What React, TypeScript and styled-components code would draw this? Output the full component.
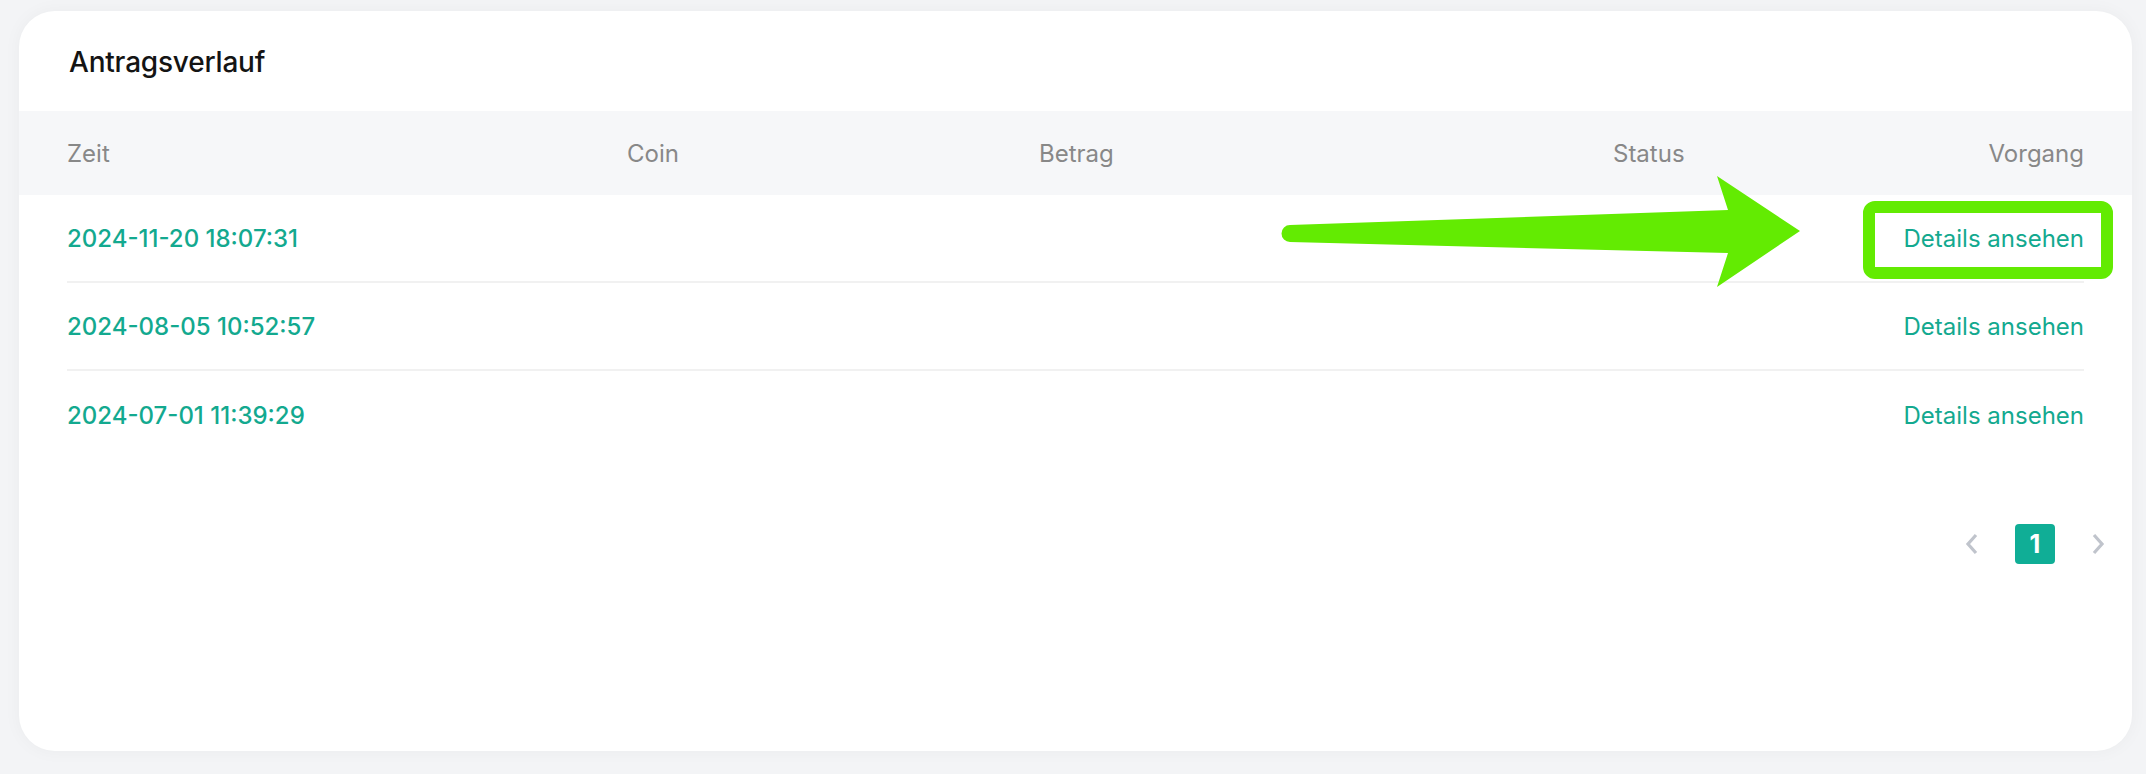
import React from "react";
import styled, { createGlobalStyle } from "styled-components";

const GlobalStyle = createGlobalStyle`
  html, body {
    margin: 0;
    padding: 0;
    background: #f3f4f6;
    font-family: Inter, "Noto Sans", sans-serif;
  }
  * { box-sizing: border-box; }
`;

const Page = styled.div`
  padding: 11px 14px 23px 19px;
`;

const Card = styled.section`
  position: relative;
  height: 740px;
  background: #ffffff;
  border-radius: 36px;
  box-shadow: 0 0 18px rgba(20, 30, 60, 0.04);
`;

const Title = styled.h2`
  margin: 0;
  height: 100px;
  display: flex;
  align-items: center;
  padding: 2px 0 0 50px;
  font-size: 28px;
  font-weight: 500;
  color: #141414;
  letter-spacing: -0.2px;
`;

const Columns = "560px 412px 574px 200px 1fr";

const HeaderRow = styled.div`
  display: grid;
  grid-template-columns: ${Columns};
  align-items: center;
  height: 84px;
  padding: 0 48px;
  background: #f6f7f9;
  color: #888888;
  font-size: 24px;
`;

const HeaderCell = styled.div<{ $right?: boolean }>`
  text-align: ${(p) => (p.$right ? "right" : "left")};
`;

const Body = styled.div`
  padding: 0 48px;
`;

const Row = styled.div`
  display: grid;
  grid-template-columns: ${Columns};
  align-items: center;
  height: 88px;
  border-bottom: 2px solid #f1f1f1;
  &:last-child {
    border-bottom: none;
  }
`;

const DateCell = styled.div`
  color: #13a98f;
  font-size: 24px;
  font-weight: 500;
`;

const Cell = styled.div``;

const ActionCell = styled.a`
  justify-self: end;
  color: #13a98f;
  font-size: 24px;
  cursor: pointer;
`;

const Pagination = styled.nav`
  display: flex;
  justify-content: flex-end;
  align-items: center;
  gap: 23px;
  margin-top: 65px;
  padding-right: 14px;
`;

const PageArrow = styled.button`
  width: 40px;
  height: 40px;
  display: flex;
  align-items: center;
  justify-content: center;
  border: none;
  background: transparent;
  padding: 0;
  color: #c0c4cc;
`;

const PageNumber = styled.button<{ $active?: boolean }>`
  width: 40px;
  height: 40px;
  border: none;
  border-radius: 4px;
  background: ${(p) => (p.$active ? "#10ae96" : "transparent")};
  color: ${(p) => (p.$active ? "#ffffff" : "#333")};
  font-family: Inter, sans-serif;
  font-size: 25px;
  font-weight: 700;
  padding: 0;
`;

const Overlay = styled.svg`
  position: absolute;
  left: 0;
  top: 0;
  pointer-events: none;
`;

const rows = ["2024-11-20 18:07:31", "2024-08-05 10:52:57", "2024-07-01 11:39:29"];

const Chevron = ({ dir }: { dir: "left" | "right" }) => (
  <svg width="14" height="22" viewBox="0 0 14 22" fill="none">
    <path
      d={dir === "left" ? "M11 2 L3 11 L11 20" : "M3 2 L11 11 L3 20"}
      stroke="currentColor"
      strokeWidth="3.2"
      strokeLinecap="butt"
      strokeLinejoin="miter"
    />
  </svg>
);

export default function App() {
  return (
    <>
      <GlobalStyle />
      <Page>
        <Card>
          <Title>Antragsverlauf</Title>
          <HeaderRow>
            <HeaderCell>Zeit</HeaderCell>
            <HeaderCell>Coin</HeaderCell>
            <HeaderCell>Betrag</HeaderCell>
            <HeaderCell>Status</HeaderCell>
            <HeaderCell $right>Vorgang</HeaderCell>
          </HeaderRow>
          <Body>
            {rows.map((d) => (
              <Row key={d}>
                <DateCell>{d}</DateCell>
                <Cell />
                <Cell />
                <Cell />
                <ActionCell>Details ansehen</ActionCell>
              </Row>
            ))}
          </Body>
          <Pagination>
            <PageArrow aria-label="prev">
              <Chevron dir="left" />
            </PageArrow>
            <PageNumber $active>1</PageNumber>
            <PageArrow aria-label="next">
              <Chevron dir="right" />
            </PageArrow>
          </Pagination>
          <Overlay width="2113" height="740" viewBox="0 0 2113 740">
            <path
              d="M1271 214 L1709 199 L1698 165 L1781 220 L1698 276 L1709 242 L1271 231 A8.5 8.5 0 0 1 1271 214 Z"
              fill="#63eb02"
            />
            <rect
              x="1850"
              y="196"
              width="238"
              height="66"
              rx="6"
              fill="none"
              stroke="#63eb02"
              strokeWidth="12"
            />
          </Overlay>
        </Card>
      </Page>
    </>
  );
}
